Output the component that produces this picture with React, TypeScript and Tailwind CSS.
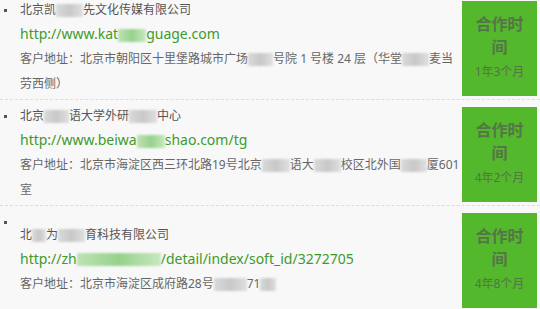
import React from 'react';

// mosaic (pixelated) fragments only carry a width class
type Part = { t?: string; mask?: string };

type Client = {
    title: Part[];
    url: Part[];
    address: Part[];
    duration: string;
};

const GRAY = 'bg-gradient-to-r from-[#dadada] via-[#c8c8c8] to-[#e0e0e0]';
const GREEN = 'bg-gradient-to-r from-[#bfe2b6] via-[#96d28c] to-[#c9e7c0]';

const clients: Client[] = [
    {
        title: [{ t: '北京凯' }, { mask: `w-[27px] ${GRAY}` }, { t: '先文化传媒有限公司' }],
        url: [{ t: 'http://www.kat' }, { mask: `w-[28px] ${GREEN}` }, { t: 'guage.com' }],
        address: [
            { t: '客户地址：北京市朝阳区十里堡路城市广场' },
            { mask: `w-[25px] ${GRAY}` },
            { t: '号院 1 号楼 24 层（华堂' },
            { mask: `w-[27px] ${GRAY}` },
            { t: '麦当劳西侧）' },
        ],
        duration: '1年3个月',
    },
    {
        title: [
            { t: '北京' },
            { mask: `w-[25px] ${GRAY}` },
            { t: '语大学外研' },
            { mask: `w-[28px] ${GRAY}` },
            { t: '中心' },
        ],
        url: [{ t: 'http://www.beiwa' }, { mask: `w-[28px] ${GREEN}` }, { t: 'shao.com/tg' }],
        address: [
            { t: '客户地址：北京市海淀区西三环北路19号北京' },
            { mask: `w-[28px] ${GRAY}` },
            { t: '语大' },
            { mask: `w-[27px] ${GRAY}` },
            { t: '校区北外国' },
            { mask: `w-[26px] ${GRAY}` },
            { t: '厦601室' },
        ],
        duration: '4年2个月',
    },
    {
        title: [
            { t: '北' },
            { mask: `w-[14px] ${GRAY}` },
            { t: '为' },
            { mask: `w-[27px] ${GRAY}` },
            { t: '育科技有限公司' },
        ],
        url: [{ t: 'http://zh' }, { mask: `w-[84px] ${GREEN}` }, { t: '/detail/index/soft_id/3272705' }],
        address: [
            { t: '客户地址：北京市海淀区成府路28号' },
            { mask: `w-[33px] ${GRAY}` },
            { t: '71' },
            { mask: `w-[16px] ${GRAY}` },
        ],
        duration: '4年8个月',
    },
];

function Parts({ parts }: { parts: Part[] }) {
    return (
        <>
            {parts.map((p, i) =>
                p.mask ? (
                    <span key={i} className={`inline-block h-[13px] align-middle blur-[1px] ${p.mask}`} />
                ) : (
                    <span key={i}>{p.t}</span>
                )
            )}
        </>
    );
}

export default function App() {
    return (
        <div
            className="w-[540px] h-[309px] overflow-hidden bg-[#f8f8f8]"
            style={{ fontFamily: '"Noto Sans", "Noto Sans CJK SC", sans-serif' }}
        >
            <ul className="-mt-[6px]">
                {clients.map((c, i) => (
                    <li key={i} className="flex items-center border-b border-dashed border-[#dcdcdc]">
                        {/* bullet */}
                        <div className="w-[3px] h-[3px] bg-[#555] ml-[4px] mt-[15px] self-start shrink-0" />

                        {/* info */}
                        <div className="flex-1 ml-[13px] mr-[2px]">
                            <p className="text-[12px] leading-[25px] text-[#555]">
                                <Parts parts={c.title} />
                            </p>
                            <p className="text-[14px] leading-[24px] text-[#3f9a2c]">
                                <Parts parts={c.url} />
                            </p>
                            <p className="text-[12px] leading-[25px] text-[#666]">
                                <Parts parts={c.address} />
                            </p>
                        </div>

                        {/* duration box */}
                        <div className="w-[75px] h-[95px] mt-[7px] mb-[3px] mr-[3px] shrink-0 bg-[#53b82b] px-[6px] flex flex-col items-center justify-center text-center text-[#56744a]">
                            <div className="text-[16px] leading-[23px] font-bold">合作时间</div>
                            <div className="text-[12px] leading-[25px]">{c.duration}</div>
                        </div>
                    </li>
                ))}
            </ul>
        </div>
    );
}
